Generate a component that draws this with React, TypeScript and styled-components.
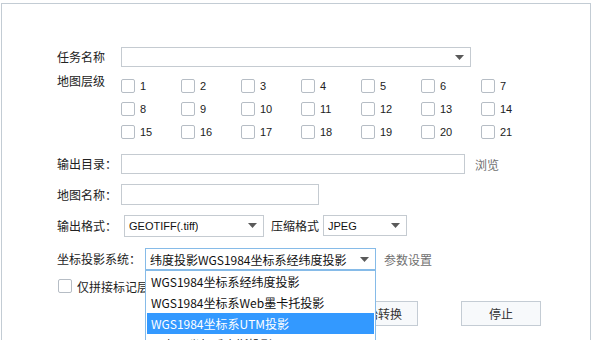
import React from 'react'
import styled, { createGlobalStyle } from 'styled-components'

const GlobalStyle = createGlobalStyle`
  body {
    margin: 0;
    background: #ffffff;
    font-family: "Noto Sans CJK SC", "Noto Sans", sans-serif;
    color: #222222;
  }
`

const Panel = styled.div`
  margin: 3px 0 0 1px;
  width: 590px;
  height: 345px;
  box-sizing: border-box;
  border: 1px solid #c3ccd4;
  border-bottom: none;
  padding: 43px 0 0 55px;
  overflow: hidden;
`

const Row = styled.div<{ $top?: number; $h: number; $align?: string }>`
  display: flex;
  align-items: ${({ $align }) => $align || 'center'};
  margin-top: ${({ $top }) => $top || 0}px;
  height: ${({ $h }) => $h}px;
`

const Label = styled.div`
  font-size: 12px;
  line-height: 14px;
  min-width: 64px;
  padding-right: 4px;
  box-sizing: border-box;
  white-space: nowrap;
  color: #222222;
`

const TextBox = styled.div<{ $w: number; $h?: number }>`
  width: ${({ $w }) => $w}px;
  height: ${({ $h }) => $h || 20}px;
  box-sizing: border-box;
  border: 1px solid #c5cbd1;
  background: #ffffff;
`

const SelectWrap = styled.div<{ $ml?: number }>`
  position: relative;
  margin-left: ${({ $ml }) => $ml || 0}px;
`

const SelectBox = styled.div<{ $w: number; $h?: number; $focus?: boolean; $small?: boolean }>`
  display: flex;
  align-items: center;
  justify-content: space-between;
  width: ${({ $w }) => $w}px;
  height: ${({ $h }) => $h || 20}px;
  box-sizing: border-box;
  border: 1px solid ${({ $focus }) => ($focus ? '#86bbe8' : '#c5cbd1')};
  background: #ffffff;
  padding: 0 6px 0 4px;
  font-size: ${({ $small }) => ($small ? '11px' : '12px')};
  font-family: ${({ $small }) => ($small ? '"Liberation Sans", Arial, sans-serif' : 'inherit')};
  color: #111111;

  span {
    overflow: hidden;
    white-space: nowrap;
  }
`

const Arrow = () => (
  <svg width="9" height="5" viewBox="0 0 9 5" style={{ flex: 'none' }}>
    <path d="M0 0 L9 0 L4.5 5 Z" fill="#5a5a5a" />
  </svg>
)

const Grid = styled.div`
  display: grid;
  grid-template-columns: repeat(7, 60px);
  grid-auto-rows: 23px;
`

const CheckItem = styled.label`
  display: flex;
  align-items: center;
  gap: 5px;
  font-size: 11px;
  font-family: "Liberation Sans", Arial, sans-serif;
  color: #222222;
`

const Box = styled.span`
  width: 14px;
  height: 14px;
  box-sizing: border-box;
  border: 1px solid #b6bdc5;
  border-radius: 2px;
  background: #ffffff;
  flex: none;
`

const LinkText = styled.span<{ $ml: number }>`
  margin-left: ${({ $ml }) => $ml}px;
  font-size: 12px;
  color: #6f6f6f;
  white-space: nowrap;
`

const PlainText = styled.span<{ $ml: number }>`
  margin-left: ${({ $ml }) => $ml}px;
  font-size: 12px;
  color: #222222;
  white-space: nowrap;
`

const MarkCheck = styled.label`
  display: flex;
  align-items: center;
  gap: 5px;
  margin-left: 1px;
  font-size: 12px;
  color: #222222;
  white-space: nowrap;
`

const DropList = styled.div`
  position: absolute;
  top: 100%;
  left: 0;
  width: 231px;
  height: 80px;
  box-sizing: border-box;
  border: 1px solid #86bbe8;
  border-bottom: none;
  background: #ffffff;
  padding: 0 1px;
  z-index: 10;
`

const DropItem = styled.div<{ $active?: boolean }>`
  height: 21px;
  line-height: 21px;
  padding-left: 4px;
  font-size: 12px;
  white-space: nowrap;
  overflow: hidden;
  background: ${({ $active }) => ($active ? '#3399ff' : 'transparent')};
  color: ${({ $active }) => ($active ? '#ffffff' : '#111111')};
`

const ButtonRow = styled.div`
  display: flex;
  gap: 43px;
  margin-top: 6px;
  padding-left: 281px;
`

const Button = styled.button`
  width: 80px;
  height: 25px;
  box-sizing: border-box;
  border: 1px solid #c4ccd4;
  background: #f7f9fb;
  font-family: inherit;
  font-size: 12px;
  color: #333333;
  padding: 0;
`

const levels = Array.from({ length: 21 }, (_, i) => i + 1)

const projections = [
  'WGS1984坐标系经纬度投影',
  'WGS1984坐标系Web墨卡托投影',
  'WGS1984坐标系UTM投影',
  '西安80坐标系高斯投影',
]

const App = () => {
  return (
    <>
      <GlobalStyle />
      <Panel>
        <Row $h={20}>
          <Label>任务名称</Label>
          <SelectBox $w={350}>
            <span></span>
            <Arrow />
          </SelectBox>
        </Row>
        <Row $top={7} $h={69} $align="flex-start">
          <Label>地图层级</Label>
          <Grid>
            {levels.map((n) => (
              <CheckItem key={n}>
                <Box />
                {n}
              </CheckItem>
            ))}
          </Grid>
        </Row>
        <Row $top={11} $h={20}>
          <Label>输出目录：</Label>
          <TextBox $w={344} />
          <LinkText $ml={10}>浏览</LinkText>
        </Row>
        <Row $top={10} $h={21}>
          <Label>地图名称：</Label>
          <TextBox $w={198} $h={21} />
        </Row>
        <Row $top={9} $h={23}>
          <Label>输出格式：</Label>
          <SelectWrap $ml={3}>
            <SelectBox $w={140} $h={22} $small>
              <span>GEOTIFF(.tiff)</span>
              <Arrow />
            </SelectBox>
          </SelectWrap>
          <PlainText $ml={7}>压缩格式</PlainText>
          <SelectWrap $ml={4}>
            <SelectBox $w={84} $h={21} $small>
              <span>JPEG</span>
              <Arrow />
            </SelectBox>
          </SelectWrap>
        </Row>
        <Row $top={11} $h={22}>
          <Label>坐标投影系统：</Label>
          <SelectWrap>
            <SelectBox $w={231} $h={22} $focus>
              <span>纬度投影WGS1984坐标系经纬度投影</span>
              <Arrow />
            </SelectBox>
            <DropList>
              {projections.map((p, i) => (
                <DropItem key={p} $active={i === 2}>
                  {p}
                </DropItem>
              ))}
            </DropList>
          </SelectWrap>
          <LinkText $ml={8}>参数设置</LinkText>
        </Row>
        <Row $top={7} $h={18}>
          <MarkCheck>
            <Box />
            仅拼接标记层
          </MarkCheck>
        </Row>
        <ButtonRow>
          <Button>开始转换</Button>
          <Button>停止</Button>
        </ButtonRow>
      </Panel>
    </>
  )
}

export default App
